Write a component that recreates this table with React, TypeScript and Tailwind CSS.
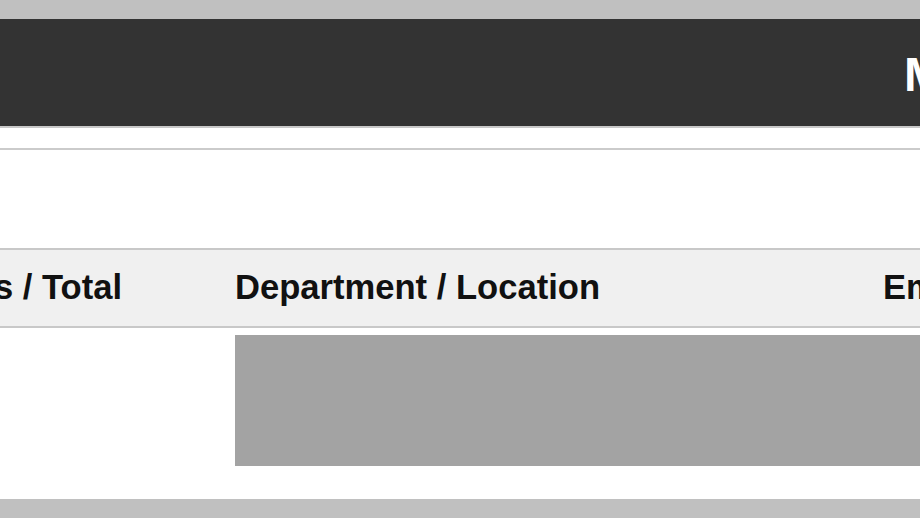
import React from "react";

const font = { fontFamily: '"Liberation Sans", Arial, sans-serif' };

export default function App() {
  return (
    <div
      className="w-[920px] h-[518px] overflow-hidden bg-white flex flex-col"
      style={font}
    >
      {/* top strip */}
      <div className="h-[19px] shrink-0 bg-[#c0c0c0]" />

      {/* dark title bar */}
      <div className="h-[107px] shrink-0 bg-[#333333] flex items-center pl-[904px] pt-1 overflow-hidden">
        <span className="text-[48px] font-bold text-white whitespace-nowrap leading-none">
          My Reports
        </span>
      </div>
      <div className="h-[2px] shrink-0 bg-[#c8c8c8]" />

      {/* toolbar */}
      <div className="h-[20px] shrink-0" />
      <div className="h-[2px] shrink-0 bg-[#cbcbcb]" />
      <div className="h-[98px] shrink-0" />

      {/* table header */}
      <div className="h-[80px] shrink-0 border-y-2 border-[#c8c8c8] bg-[#f0f0f0] flex items-center text-[34.6px] font-bold text-[#111] whitespace-nowrap overflow-hidden">
        <div className="w-[235px] shrink-0 flex justify-end pr-[113px] overflow-hidden">
          <span>Hours / Total</span>
        </div>
        <div className="w-[648px] shrink-0">Department / Location</div>
        <div className="shrink-0">Employees</div>
      </div>

      {/* loading row */}
      <div className="flex pt-[7px] shrink-0">
        <div className="w-[235px] shrink-0" />
        <div className="flex-1 h-[131px] bg-[#a3a3a3]" />
      </div>
      <div className="h-[33px] shrink-0" />

      {/* bottom strip */}
      <div className="flex-1 bg-[#c0c0c0]" />
    </div>
  );
}
